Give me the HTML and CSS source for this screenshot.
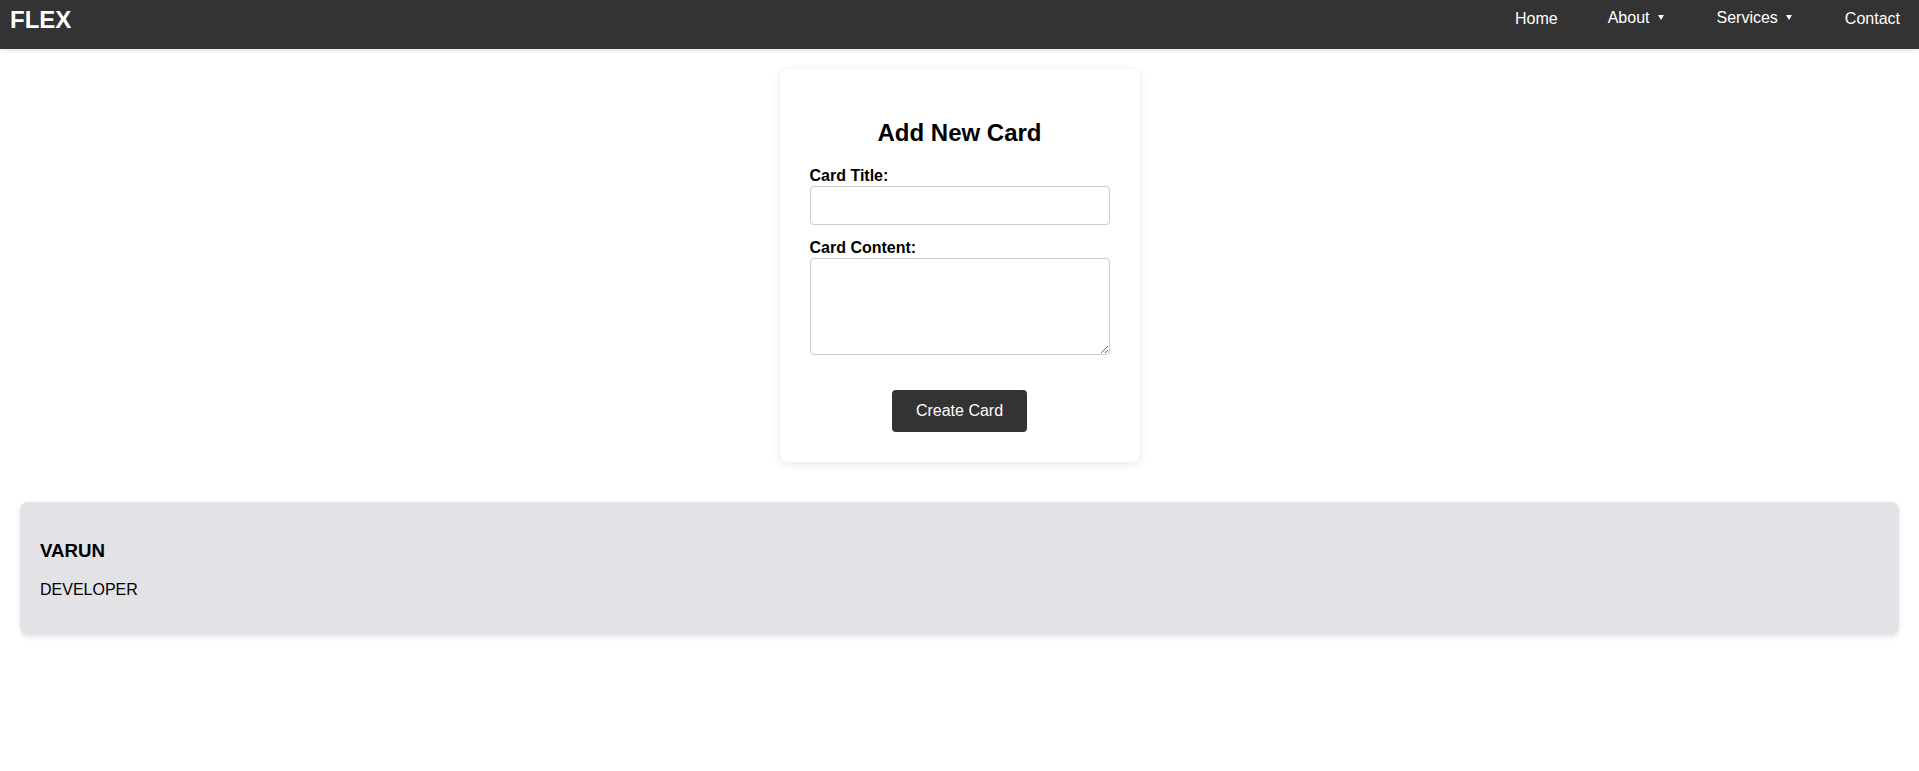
FILE: index.html
```html
<!DOCTYPE html>
<html lang="en">
<head>
<meta charset="utf-8">
<title>FLEX</title>
<link rel="stylesheet" href="styles.css">
</head>
<body>
<nav class="navbar">
  <div class="logo">FLEX</div>
  <ul class="nav-links">
    <li class="nav-item"><a href="#">Home</a></li>
    <li class="nav-item dropdown"><a href="#">About<span class="caret"></span></a></li>
    <li class="nav-item dropdown"><a href="#">Services<span class="caret"></span></a></li>
    <li class="nav-item"><a href="#">Contact</a></li>
  </ul>
</nav>

<main class="content">
  <section class="form-card">
    <h2 class="form-title">Add New Card</h2>
    <form class="card-form">
      <label class="field-label" for="title">Card Title:</label>
      <input class="field-input" id="title" type="text">
      <label class="field-label" for="body">Card Content:</label>
      <textarea class="field-textarea" id="body"></textarea>
      <button class="create-btn" type="button">Create Card</button>
    </form>
  </section>

  <section class="cards">
    <article class="card">
      <h3 class="card-title">VARUN</h3>
      <p class="card-text">DEVELOPER</p>
    </article>
  </section>
</main>
</body>
</html>
```
FILE: styles.css
```css
* {
  box-sizing: border-box;
}

body {
  margin: 0;
  font-family: "Liberation Sans", Arial, sans-serif;
  color: #000;
  background: #fff;
}

.navbar {
  height: 49px;
  background: #333;
  display: flex;
  justify-content: space-between;
  align-items: flex-start;
  padding: 0 19px 0 10px;
  box-shadow: 0 2px 4px rgba(0, 0, 0, 0.1);
}

.logo {
  color: #fff;
  font-size: 24px;
  font-weight: bold;
  padding-top: 6px;
}

.nav-links {
  list-style: none;
  margin: 0;
  padding: 0;
  display: flex;
  gap: 50px;
}

.nav-item {
  padding-top: 10px;
  font-size: 16px;
}

.nav-item.dropdown {
  padding-top: 8.5px;
}

.nav-item a {
  color: #fff;
  text-decoration: none;
}

.caret {
  display: inline-block;
  width: 0;
  height: 0;
  margin-left: 8px;
  margin-right: 3px;
  border-left: 3.5px solid transparent;
  border-right: 3.5px solid transparent;
  border-top: 5px solid #fff;
  vertical-align: 3px;
}

.content {
  padding: 20px 20px;
}

.form-card {
  width: 360px;
  margin: 0 auto 20px;
  padding: 30px;
  background: #fff;
  border-radius: 8px;
  box-shadow: 0 2px 10px rgba(0, 0, 0, 0.1);
}

.form-title {
  text-align: center;
  font-size: 24px;
  margin: 20px 0;
}

.card-form {
  display: flex;
  flex-direction: column;
}

.field-label {
  font-weight: bold;
  font-size: 16px;
  margin-bottom: 0.5px;
}

.field-input,
.field-textarea {
  display: block;
  width: 100%;
  border: 1px solid #ccc;
  border-radius: 4px;
  font-family: inherit;
  font-size: 16px;
  padding: 8px;
}

.field-input {
  height: 39px;
  margin-bottom: 14.5px;
}

.field-textarea {
  height: 97.5px;
  margin-bottom: 34.5px;
}

.create-btn {
  align-self: center;
  height: 42px;
  padding: 0 24px;
  background: #333;
  color: #fff;
  border: none;
  border-radius: 4px;
  font-family: inherit;
  font-size: 16px;
}

.cards {
  display: flex;
  flex-direction: column;
  padding-top: 20px;
}

.card {
  background: #e3e2e7;
  border-radius: 8px;
  padding: 20px;
  box-shadow: 0 2px 5px rgba(0, 0, 0, 0.1);
}

.card-title {
  font-size: 18.72px;
  margin: 18.72px 0;
}

.card-text {
  font-size: 16px;
  margin: 16px 0;
}
```
